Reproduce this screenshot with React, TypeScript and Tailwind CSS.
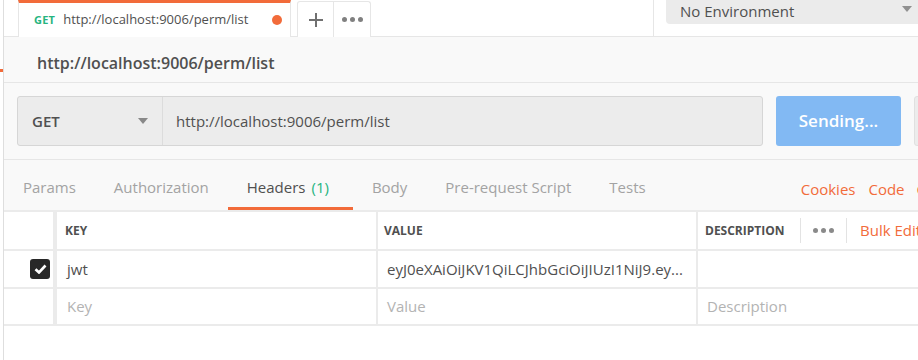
const orange = 'text-[#f26b3a]'

function Caret({ className }: { className?: string }) {
  return (
    <svg className={className} width="10" height="6" viewBox="0 0 10 6">
      <path d="M0 0h10L5 6z" fill="currentColor" />
    </svg>
  )
}

function Dots({ className }: { className?: string }) {
  return (
    <div className={`flex items-center gap-[3px] ${className ?? ''}`}>
      <span className="h-[5px] w-[5px] rounded-full bg-current" />
      <span className="h-[5px] w-[5px] rounded-full bg-current" />
      <span className="h-[5px] w-[5px] rounded-full bg-current" />
    </div>
  )
}

function TabBar() {
  return (
    <div className="flex h-[37px] shrink-0 border-b border-[#e6e6e6] bg-white">
      <div className="w-[14px] shrink-0" />
      <div className="flex w-[273px] shrink-0 items-center border-t-[3px] border-x border-x-[#e6e6e6] border-t-[#f26b3a] bg-white pl-[15px] pr-[8px] -mb-px">
        <span className="text-[11px] font-bold tracking-[0.02em] text-[#26b47f]">GET</span>
        <span className="ml-[8px] text-[13px] text-[#505050]">http://localhost:9006/perm/list</span>
        <span className="ml-auto h-[10px] w-[10px] rounded-full bg-[#f26b3a]" />
      </div>
      <div className="ml-[6px] mt-[1px] flex h-[36px] shrink-0 rounded-t-[3px] border border-b-0 border-[#e6e6e6] bg-white">
        <div className="flex w-[36px] items-center justify-center border-r border-[#e6e6e6]">
          <svg width="14" height="14" viewBox="0 0 14 14">
            <path d="M7 0v14M0 7h14" stroke="#707070" strokeWidth="2" />
          </svg>
        </div>
        <div className="flex w-[36px] items-center justify-center text-[#808080]">
          <Dots className="gap-[2px]" />
        </div>
      </div>
      <div className="flex-1" />
      <div className="flex w-[265px] shrink-0 border-l border-[#e6e6e6] pl-[12px]">
        <div className="flex h-[24px] w-full items-start rounded-bl-[4px] bg-[#ebebeb] pl-[14px] pr-[6px] pt-[2px]">
          <span className="text-[15px] leading-[18px] text-[#505050]">No Environment</span>
          <Caret className="ml-auto mt-[4px] text-[#909090]" />
        </div>
      </div>
    </div>
  )
}

const tabs = ['Params', 'Authorization', 'Headers', 'Body', 'Pre-request Script', 'Tests']

function RequestTabs() {
  return (
    <div className="flex h-[51px] shrink-0 items-stretch border-t border-[#e6e6e6] bg-[#f9f9f9] text-[15px]">
      {tabs.map((t) => (
        <div
          key={t}
          className={`flex items-center pt-[8px] ${
            t === 'Headers'
              ? 'border-b-[3px] border-[#f26b3a] pl-[19px] pr-[24px] text-[#505050]'
              : 'border-b-[3px] border-transparent px-[19px] text-[#a3a3a3]'
          }`}
        >
          {t}
          {t === 'Headers' && <span className="ml-[6px] text-[#26b47f]">(1)</span>}
        </div>
      ))}
      <div className={`ml-auto flex items-center gap-[12px] pt-[8px] ${orange}`}>
        <span className="mr-[1px]">Cookies</span>
        <span>Code</span>
        <span className="-mr-[8px]">C</span>
      </div>
    </div>
  )
}

function Row({ children, h }: { children: React.ReactNode; h: string }) {
  return <div className={`flex ${h} border-b-2 border-[#ebebeb]`}>{children}</div>
}

function HeadersTable() {
  return (
    <div className="flex flex-col border-t-2 border-[#ebebeb] bg-white text-[15px] text-[#505050]">
      <Row h="h-[39px]">
        <div className="w-[53px] shrink-0 border-r-4 border-[#ebebeb]" />
        <div className="flex w-[321px] shrink-0 items-center border-r-2 border-[#ebebeb] pl-[8px] text-[12px] font-bold">KEY</div>
        <div className="flex w-[320px] shrink-0 items-center border-r-2 border-[#ebebeb] pl-[6px] text-[12px] font-bold">VALUE</div>
        <div className="flex w-[102px] shrink-0 items-center pl-[7px] text-[12px] font-bold">DESCRIPTION</div>
        <div className="my-[6px] w-px shrink-0 bg-[#e3e3e3]" />
        <div className="flex w-[45px] shrink-0 items-center justify-center text-[#8a8a8a]">
          <Dots className="gap-[2px]" />
        </div>
        <div className="my-[6px] w-px shrink-0 bg-[#e3e3e3]" />
        <div className={`flex shrink-0 items-center pl-[13px] whitespace-nowrap ${orange}`}>Bulk Edit</div>
      </Row>
      <Row h="h-[38px]">
        <div className="flex w-[53px] shrink-0 items-center justify-end border-r-4 border-[#ebebeb] pr-[3px]">
          <div className="flex h-[20px] w-[20px] items-center justify-center rounded-[3px] bg-[#282828]">
            <svg width="13" height="10" viewBox="0 0 13 10">
              <path d="M1.5 5.2l3.5 3.3L11.5 1.5" stroke="white" strokeWidth="2.6" fill="none" />
            </svg>
          </div>
        </div>
        <div className="flex w-[321px] shrink-0 items-center border-r-2 border-[#ebebeb] pl-[10px]">jwt</div>
        <div className="flex w-[320px] shrink-0 items-center border-r-2 border-[#ebebeb] pl-[9px] whitespace-nowrap">
          eyJ0eXAiOiJKV1QiLCJhbGciOiJIUzI1NiJ9.ey...
        </div>
        <div className="flex-1" />
      </Row>
      <Row h="h-[37px]">
        <div className="w-[53px] shrink-0 border-r-4 border-[#ebebeb]" />
        <div className="flex w-[321px] shrink-0 items-center border-r-2 border-[#ebebeb] pl-[10px] text-[#b3b3b3]">Key</div>
        <div className="flex w-[320px] shrink-0 items-center border-r-2 border-[#ebebeb] pl-[9px] text-[#b3b3b3]">Value</div>
        <div className="flex flex-1 items-center pl-[9px] text-[#b3b3b3]">Description</div>
      </Row>
    </div>
  )
}

export default function App() {
  return (
    <div className="flex h-[360px] w-[918px] overflow-hidden bg-white font-['Open_Sans',sans-serif]">
      {/* sidebar edge */}
      <div className="relative w-[4px] shrink-0 border-r border-[#dedede] bg-white">
        <div className="absolute left-0 top-[69px] h-[3px] w-[3px] bg-[#f26b3a]" />
      </div>

      <div className="flex min-w-0 flex-1 flex-col">
        <TabBar />

        <div className="flex h-[46px] shrink-0 items-center border-b border-[#e6e6e6] bg-[#f9f9f9] pl-[33px] pt-[6px] text-[16px] font-semibold text-[#505050]">
          http://localhost:9006/perm/list
        </div>

        <div className="flex shrink-0 gap-[13px] bg-[#f9f9f9] py-[13px] pl-[13px]">
          <div className="flex h-[50px] w-[746px] shrink-0 rounded-[3px] border border-[#d6d6d6] bg-[#ececec] text-[15px] text-[#505050]">
            <div className="flex w-[145px] shrink-0 items-center border-r border-[#dcdcdc] pl-[14px] pr-[14px] font-semibold">
              GET
              <Caret className="ml-auto text-[#888888]" />
            </div>
            <div className="flex flex-1 items-center pl-[13px]">http://localhost:9006/perm/list</div>
          </div>
          <div className="flex h-[50px] w-[125px] shrink-0 items-center justify-center rounded-[3px] bg-[#82b9f3] text-[17px] font-semibold text-white">
            Sending...
          </div>
          <div className="h-[50px] w-[80px] shrink-0 rounded-[3px] border border-[#e0e0e0] bg-[#ececec]" />
        </div>

        <RequestTabs />
        <HeadersTable />
      </div>
    </div>
  )
}
